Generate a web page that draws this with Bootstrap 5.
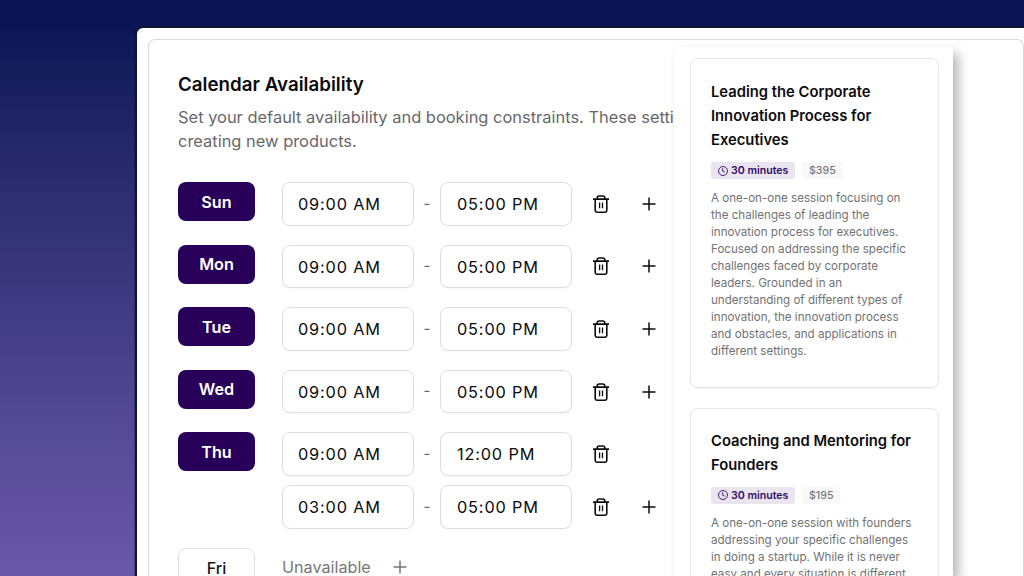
<!DOCTYPE html>
<html lang="en">
<head>
<meta charset="utf-8">
<meta name="viewport" content="width=device-width, initial-scale=1">
<title>Calendar Availability</title>
<link href="https://cdn.jsdelivr.net/npm/bootstrap@5.3.0/dist/css/bootstrap.min.css" rel="stylesheet">
<style>
body{font-family:Inter,sans-serif;height:576px;overflow:hidden;color:#0c0c0e;background:linear-gradient(#0a1252 0,#0b1556 24px,#151d5b 65px,#2a2b6d 175px,#3f3a81 300px,#554a96 430px,#6958a8 576px)}
.app-window{margin:26px 0 0 135px;width:889px;height:550px;border:2px solid #0e1530;border-width:2px 0 0 2px;border-radius:8px 0 0 0;padding:11px 0 0 11px;box-shadow:0 0 2px #0e1530;overflow:hidden}
.panel{width:876px;height:537px;border:1px solid #d9d9da;border-bottom:0;border-radius:7px 7px 0 0;overflow:hidden}
.availability{width:525px;padding:33px 0 0 29px;flex:none;overflow:hidden;white-space:nowrap}
.availability h1{font-size:18.75px;line-height:24px;font-weight:600;margin:0 0 8px}
.intro{font-size:16.46px;line-height:24px;color:#68686b;margin:0 0 29px}
.days{gap:19px}
.day-row{gap:27px}
.day-btn{width:77px;height:39px;border-radius:8px;padding:0;font-size:16.2px;font-weight:600;line-height:38px;background:#280059;color:#fff;border:0}
.day-btn.off{background:#fff;color:#18181b;border:1px solid #dfdfe1;font-weight:500}
.slots{gap:9.4px}
.time-field{width:132px;height:43.6px;border:1px solid #dedee0;border-radius:8px;padding:0 0 0 15px;font-size:16.3px;line-height:42px;letter-spacing:.84px;box-shadow:0 1px 2px #00000008}
.dash + .time-field{padding-left:16px}
.dash{width:26px;text-align:center;color:#66666a;font-size:15px}
.tool{width:20px;height:20px;fill:none;stroke:currentColor}
.trash{margin-left:19px;margin-right:28px}
.products{width:279px;height:530px;margin-top:7px;padding:11px 14.5px 0 16px;border-radius:3px;background:#fff;flex:none;box-shadow:6px 6px 11px #00000045,0 0 2px #0000000a}
.product{flex:none;border:1px solid #e6e6e8;border-radius:8px;padding:21px 0 0 20px;white-space:nowrap;box-shadow:0 1px 2px #0000000d}
.product + .product{padding-top:20px}
.product h2{font-size:14.78px;line-height:24px;font-weight:600;margin:0 0 10px}
.tag{height:17px;border-radius:3px;font-size:10.6px;line-height:17px;font-weight:600;padding:0 7px}
.tag-time{background:#e9e4ee;color:#330c6b;width:84px}
.tag-time svg{margin-right:3px}
.tag-price{background:#f8f8f8;color:#77777a;font-weight:500}
.product p{font-size:11.6px;line-height:17px;color:#727275;margin:11px 0 0}
</style>
</head>
<body>
<main class="app-window bg-white">
<div class="panel d-flex align-items-start">
<section class="availability">
<h1>Calendar Availability</h1>
<p class="intro">Set your default availability and booking constraints. These setti<br>creating new products.</p>
<div id="days" class="days d-flex flex-column"></div>
</section>
<aside class="products d-flex flex-column">
<article class="product" style="height:329.5px;margin-bottom:20px">
<h2>Leading the Corporate<br>Innovation Process for<br>Executives</h2>
<div class="d-flex" style="gap:7px"><span class="tag tag-time d-flex align-items-center"><svg width="10" height="10" viewBox="0 0 10 10" fill="none" stroke="currentColor" stroke-width=".9" class="flex-shrink-0"><circle cx="5" cy="5" r="4.5"/><path d="M4.7 2.2V5.2L6.8 6.2"/></svg>30 minutes</span><span class="tag tag-price">$395</span></div>
<p>A one-on-one session focusing on<br>the challenges of leading the<br>innovation process for executives.<br>Focused on addressing the specific<br>challenges faced by corporate<br>leaders. Grounded in an<br>understanding of different types of<br>innovation, the innovation process<br>and obstacles, and applications in<br>different settings.</p>
</article>
<article class="product" style="height:330px">
<h2>Coaching and Mentoring for<br>Founders</h2>
<div class="d-flex" style="gap:7px"><span class="tag tag-time d-flex align-items-center"><svg width="10" height="10" viewBox="0 0 10 10" fill="none" stroke="currentColor" stroke-width=".9" class="flex-shrink-0"><circle cx="5" cy="5" r="4.5"/><path d="M4.7 2.2V5.2L6.8 6.2"/></svg>30 minutes</span><span class="tag tag-price">$195</span></div>
<p>A one-on-one session with founders<br>addressing your specific challenges<br>in doing a startup. While it is never<br>easy and every situation is different,</p>
</article>
</aside>
</div>
</main>
<script src="https://cdn.jsdelivr.net/npm/bootstrap@5.3.0/dist/js/bootstrap.bundle.min.js"></script>
<script>
const trash='<svg class="tool trash" viewBox="0 0 20 20" stroke-width="1.6"><path d="M2 5.1H18M4.2 5.3V16.6Q4.2 18.2 5.8 18.2H14.2Q15.8 18.2 15.8 16.6V5.3M6.2 5V4Q6.2 2 8.2 2H11.8Q13.8 2 13.8 4V5"/><path stroke-width="1.3" d="M8.6 8.6V14.3M11.5 8.6V14.3"/></svg>';
const plus='<svg class="tool" viewBox="0 0 20 20" stroke-width="1.5"><path d="M10 3.5V16.5M3.5 10H16.5"/></svg>';
const slot=([a,b],last)=>`<div class="d-flex align-items-center"><div class="time-field">${a}</div><span class="dash">-</span><div class="time-field">${b}</div>${trash}${last?plus:''}</div>`;
const usual=[['09:00 AM','05:00 PM']];
const days=[['Sun',usual],['Mon',usual],['Tue',usual],['Wed',usual],['Thu',[['09:00 AM','12:00 PM'],['03:00 AM','05:00 PM']]]];
document.getElementById('days').innerHTML=days.map(([d,s])=>`<div class="day-row d-flex align-items-start"><button class="btn day-btn">${d}</button><div class="slots d-flex flex-column">${s.map((x,i)=>slot(x,i===s.length-1)).join('')}</div></div>`).join('')
+`<div class="day-row d-flex align-items-start"><button class="btn day-btn off">Fri</button><div class="d-flex align-items-center" style="height:39px;color:#77777a"><span style="font-size:16.2px;margin-right:19px">Unavailable</span>${plus}</div></div>`;
</script>
</body>
</html>
